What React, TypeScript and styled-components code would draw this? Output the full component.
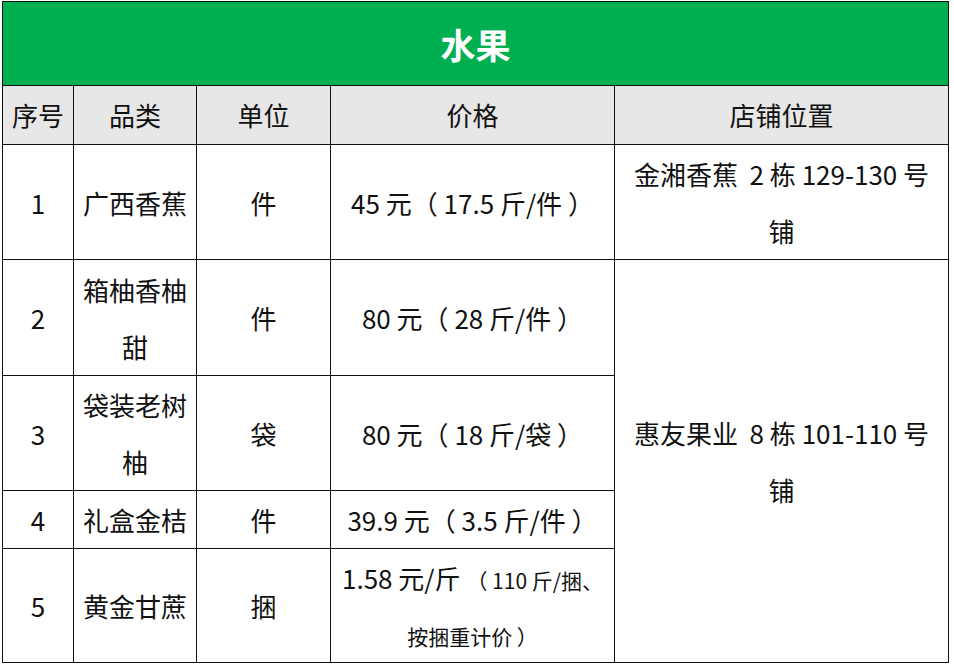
import * as React from 'react'
import styled, { createGlobalStyle } from 'styled-components'

const GlobalStyle = createGlobalStyle`
  html, body {
    margin: 0;
    padding: 0;
    background: #fff;
  }
  body {
    font-family: "Noto Sans CJK SC", "Noto Sans", sans-serif;
    color: #111;
  }
`

const Sheet = styled.table`
  margin: 1px 0 0 2px;
  width: 946px;
  table-layout: fixed;
  border-collapse: collapse;
  font-size: 26px;
  line-height: 57px;
`

const TitleCell = styled.th`
  height: 83px;
  background: #00b050;
  color: #fff;
  font-size: 35px;
  font-weight: 700;
  line-height: 40px;
  border: 1.5px solid #111;
  text-align: center;
  padding: 0;
`

const HeadCell = styled.th`
  height: 58px;
  background: #e7e7e7;
  font-weight: 400;
  border: 1.5px solid #111;
  text-align: center;
  line-height: 30px;
  padding: 0;
`

const Cell = styled.td<{ $h?: number; $lh?: number }>`
  height: ${p => p.$h ?? 114}px;
  border: 1.5px solid #111;
  text-align: center;
  vertical-align: middle;
  padding: 0 4px;
  word-break: break-all;
  white-space: pre-wrap;
  ${p => (p.$lh ? `line-height: ${p.$lh}px;` : '')}
`

const Small = styled.span`
  font-size: 21px;
  line-height: 1;
`

const cols = [71, 123, 134, 284, 334]

type Row = { no: string; name: string; unit: string; price: React.ReactNode; h?: number }

const rows: Row[] = [
  { no: '1', name: '广西香蕉', unit: '件', price: '45 元（ 17.5 斤/件 ）', h: 114 },
  { no: '2', name: '箱柚香柚甜', unit: '件', price: '80 元（ 28 斤/件 ）', h: 115 },
  { no: '3', name: '袋装老树柚', unit: '袋', price: '80 元（ 18 斤/袋 ）', h: 114 },
  { no: '4', name: '礼盒金桔', unit: '件', price: '39.9 元（ 3.5 斤/件 ）', h: 57 },
  {
    no: '5',
    name: '黄金甘蔗',
    unit: '捆',
    price: (
      <>
        1.58 元/斤 <Small>（ 110 斤/捆、<br />按捆重计价 ）</Small>
      </>
    ),
    h: 113,
  },
]

export default function App() {
  return (
    <>
      <GlobalStyle />
      <Sheet>
        <colgroup>
          {cols.map((w, i) => (
            <col key={i} style={{ width: w }} />
          ))}
        </colgroup>
        <thead>
          <tr>
            <TitleCell colSpan={5}>水果</TitleCell>
          </tr>
          <tr>
            <HeadCell>序号</HeadCell>
            <HeadCell>品类</HeadCell>
            <HeadCell>单位</HeadCell>
            <HeadCell>价格</HeadCell>
            <HeadCell>店铺位置</HeadCell>
          </tr>
        </thead>
        <tbody>
          {rows.map((r, i) => (
            <tr key={r.no}>
              <Cell $h={r.h}>{r.no}</Cell>
              <Cell $h={r.h}>{r.name}</Cell>
              <Cell $h={r.h}>{r.unit}</Cell>
              <Cell $h={r.h} $lh={i === 4 ? 56 : undefined}>
                {r.price}
              </Cell>
              {i === 0 && (
                <Cell $h={r.h}>
                  {'金湘香蕉  2 栋 129-130 号'}
                  <br />铺
                </Cell>
              )}
              {i === 1 && (
                <Cell rowSpan={4}>
                  {'惠友果业  8 栋 101-110 号'}
                  <br />铺
                </Cell>
              )}
            </tr>
          ))}
        </tbody>
      </Sheet>
    </>
  )
}
